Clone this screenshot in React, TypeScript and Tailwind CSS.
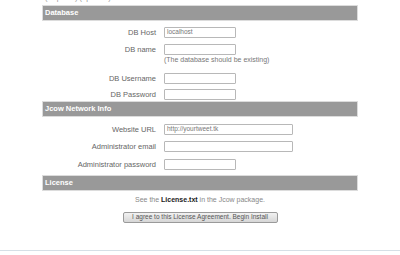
import React from 'react';

const font = { fontFamily: '"Liberation Sans", Arial, sans-serif' };

const SectionBar: React.FC<{ title: string; className?: string }> = ({ title, className }) => (
  <div className={`h-[16px] border border-[#dcdcdc] bg-[#999999] flex items-center pl-[2px] ${className ?? ''}`}>
    <span className="text-[7.5px] font-bold text-white leading-none">{title}</span>
  </div>
);

interface RowProps {
  label: string;
  value?: string;
  wide?: boolean;
  className?: string;
}

const FieldRow: React.FC<RowProps> = ({ label, value, wide, className }) => (
  <div className={`flex items-center h-[11px] ${className ?? ''}`}>
    <label className="w-[122px] pr-[8px] text-right text-[7.5px] text-[#666666] leading-none whitespace-nowrap">
      {label}
    </label>
    <div
      className={`h-[11px] ${wide ? 'w-[129px]' : 'w-[72px]'} border border-[#b8b8b8] rounded-[1px] bg-white flex items-center px-[2px]`}
    >
      {value && <span className="text-[6.5px] text-[#777777] leading-none">{value}</span>}
    </div>
  </div>
);

export default function App() {
  return (
    <div className="w-[400px] h-[255px] bg-white overflow-hidden" style={font}>
      <div className="mx-auto w-[316px]">
        <div className="h-[5px] overflow-hidden">
          <p className="-mt-[6px] pl-[3px] text-[7.5px] text-[#999999] leading-[8px]">(required) (optional)</p>
        </div>

        <SectionBar title="Database" />
        <FieldRow label="DB Host" value="localhost" className="mt-[6px]" />
        <FieldRow label="DB name" className="mt-[6px]" />
        <div className="mt-[1px] h-[8px] pl-[122px] text-[7px] text-[#777777] leading-[8px] whitespace-nowrap">
          (The database should be existing)
        </div>
        <FieldRow label="DB Username" className="mt-[9px]" />
        <FieldRow label="DB Password" className="mt-[5px]" />

        <SectionBar title="Jcow Network Info" className="mt-[1px]" />
        <FieldRow label="Website URL" value="http://yourtweet.tk" wide className="mt-[7px]" />
        <FieldRow label="Administrator email" wide className="mt-[6px]" />
        <FieldRow label="Administrator password" className="mt-[7px]" />

        <SectionBar title="License" className="mt-[5px]" />
        <p className="mt-[5px] h-[8px] text-center text-[7px] text-[#888888] leading-[8px]">
          See the <span className="font-bold text-[#222222]">License.txt</span> in the Jcow package.
        </p>
        <div className="mt-[8px] flex justify-center">
          <button className="h-[11px] w-[155px] border border-[#9a9a9a] rounded-[2px] bg-gradient-to-b from-[#f2f2f2] to-[#d6d6d6] text-[6.5px] text-[#555555] leading-none">
            I agree to this License Agreement. Begin Install
          </button>
        </div>
      </div>
      <div className="mt-[27px] border-t border-[#d6dfe6]" />
    </div>
  );
}
